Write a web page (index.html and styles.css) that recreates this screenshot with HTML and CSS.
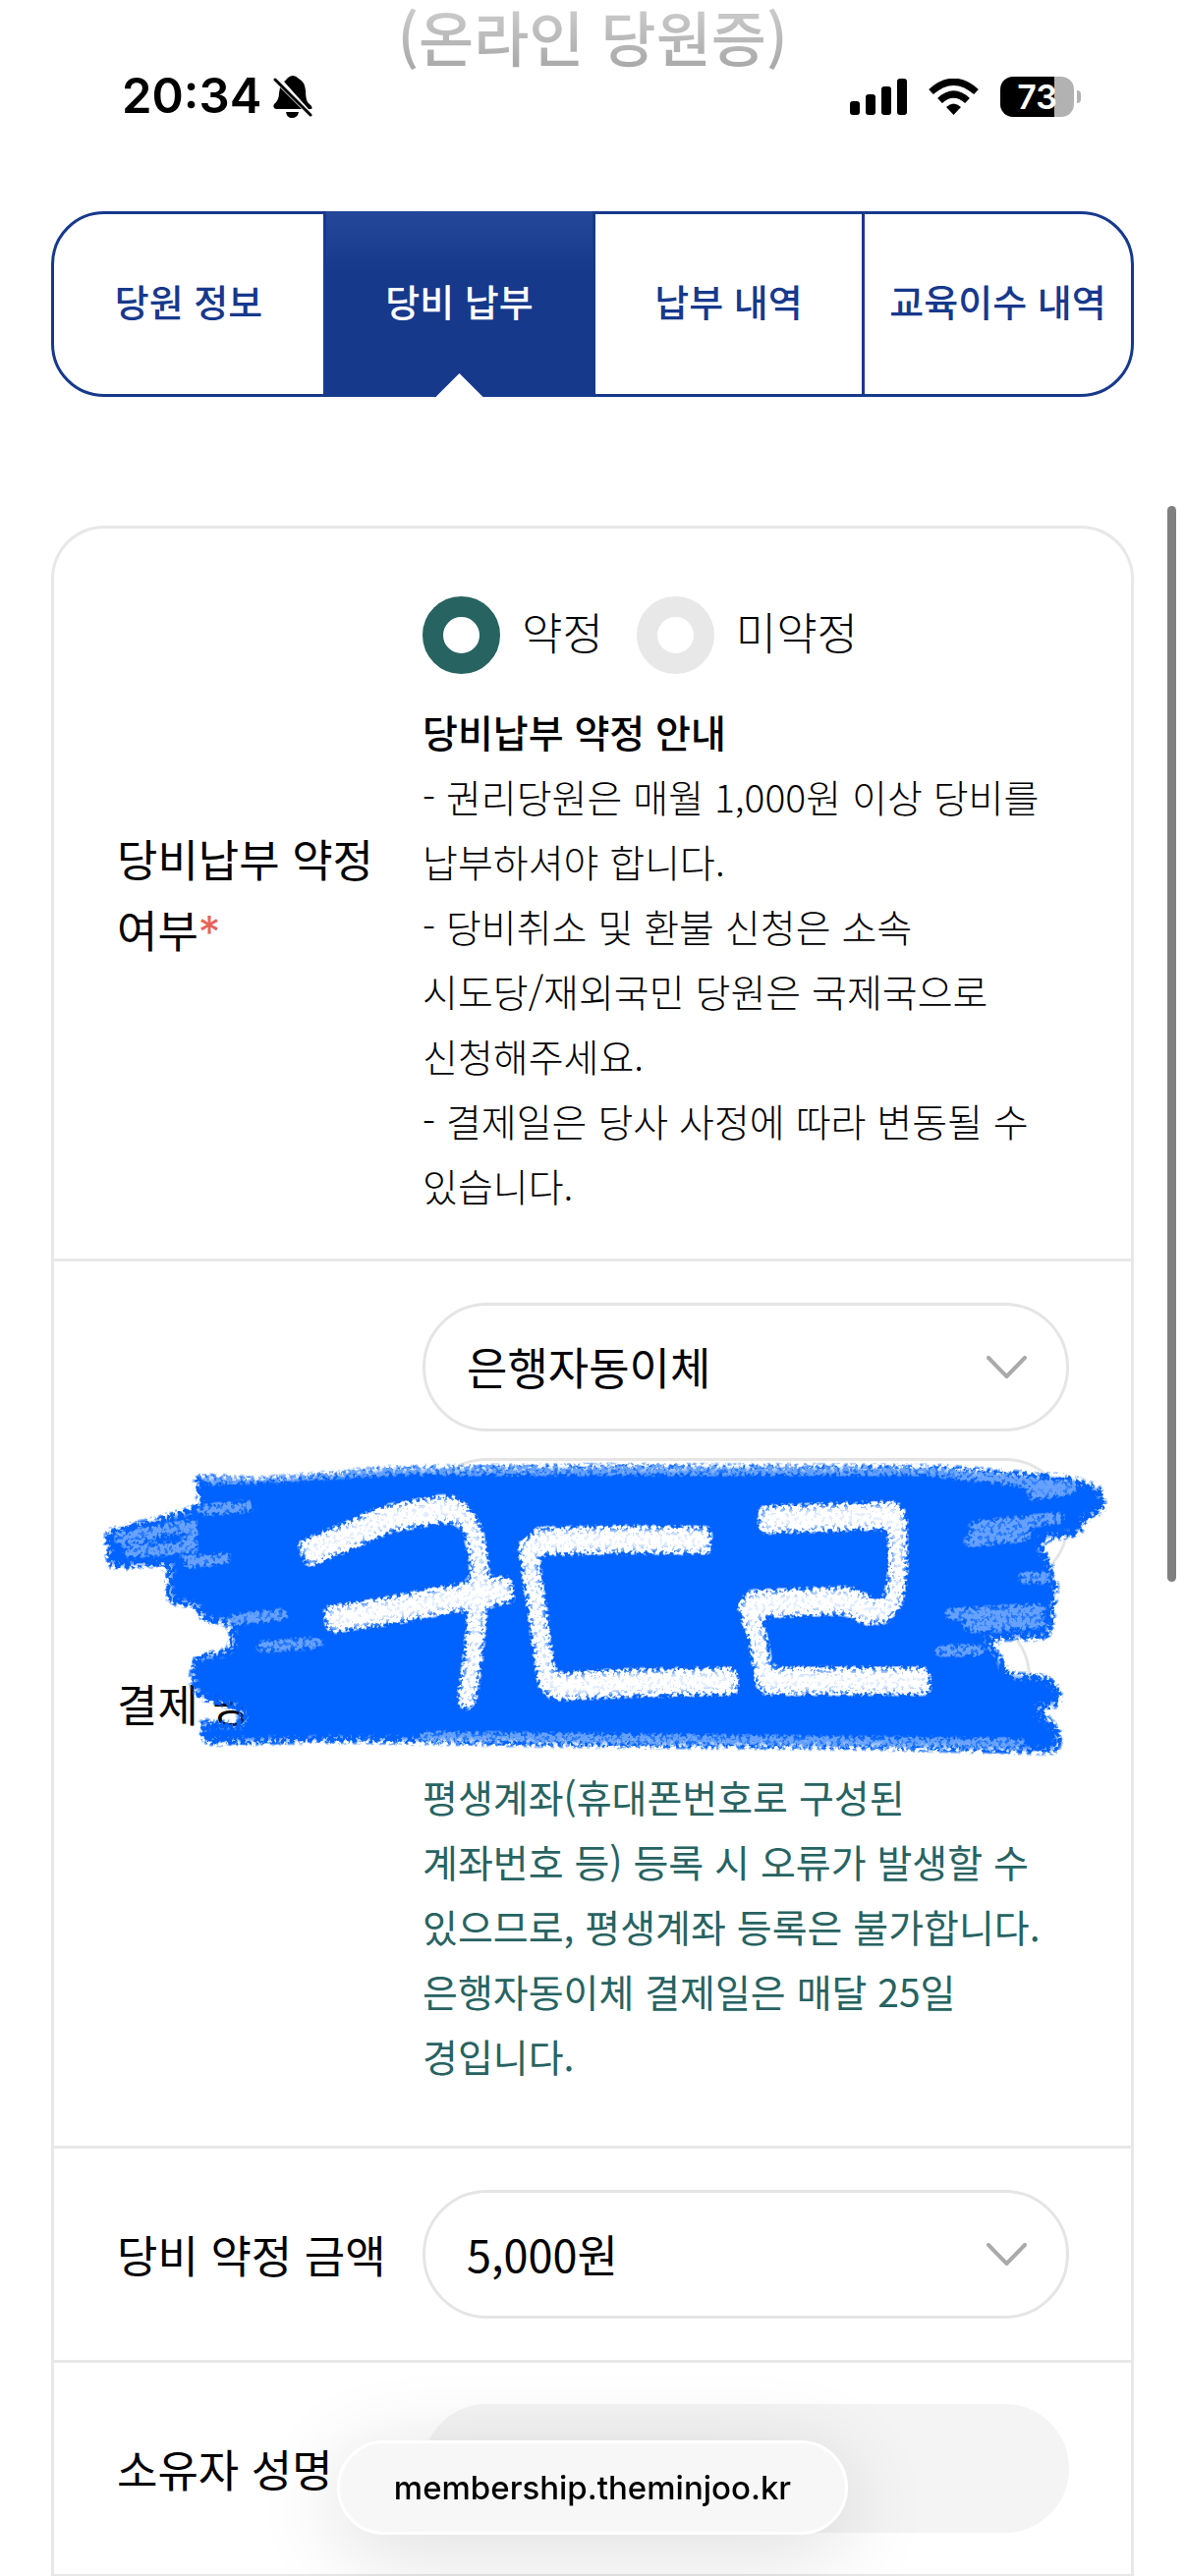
FILE: index.html
```html
<!DOCTYPE html>
<html lang="ko">
<head>
<meta charset="utf-8">
<meta name="viewport" content="width=device-width, initial-scale=1">
<title>당비 납부</title>
<link rel="stylesheet" href="styles.css">
</head>
<body>
<header class="top">
  <h1 class="title">(온라인 당원증)</h1>
  <div class="status">
    <div class="status-side">
      <span class="time">20:34</span>
      <svg class="bell" viewBox="0 0 40 43" aria-hidden="true">
        <path d="M11 6 Q13 5 14 3 Q20 -3 26 3 Q32 6 33 15 Q33 23 35 27 L39 31 Q40 33 39 34 L36 34 Z M7 12 L29 34 H3 Q-1 33 1 29 Q6 25 6 18 Z M13 37 H26 Q25 43 19 43 Q14 43 13 37 Z"/>
        <path d="M2 4 L38 40" fill="none" stroke="#000" stroke-width="3" stroke-linecap="round"/>
      </svg>
    </div>
    <div class="status-side status-right">
      <svg class="signal" viewBox="0 0 58 37" aria-hidden="true">
        <rect x="0" y="23" width="10" height="14" rx="3"/><rect x="16" y="16" width="10" height="21" rx="3"/><rect x="32" y="8" width="10" height="29" rx="3"/><rect x="48" y="0" width="10" height="37" rx="3"/>
      </svg>
      <svg class="wifi" viewBox="0 0 51 37" aria-hidden="true">
        <path d="M25.500 37 L18 29 Q25.500 22 33 29 Z"/>
        <path d="M2.500 13.500 Q25.500 -7 48.500 13.500" fill="none" stroke="#000" stroke-width="7"/>
        <path d="M11.500 22.500 Q25.500 9.500 39.500 22.500" fill="none" stroke="#000" stroke-width="7"/>
      </svg>
      <div class="battery"><span>73</span></div>
    </div>
  </div>
</header>

<nav class="tabs">
  <a class="tab" href="#info">당원 정보</a>
  <a class="tab tab-active" href="#fee" aria-current="page">당비 납부</a>
  <a class="tab" href="#history">납부 내역</a>
  <a class="tab" href="#edu">교육이수 내역</a>
</nav>

<form class="card">
  <fieldset class="row" aria-labelledby="pledge-label">
    <div class="label label-wrap" id="pledge-label">당비납부 약정 여부<em>*</em></div>
    <div class="control">
      <div class="radios">
        <label class="radio"><input type="radio" name="pledge" checked><span>약정</span></label>
        <label class="radio"><input type="radio" name="pledge"><span>미약정</span></label>
      </div>
      <div class="guide">
        <strong>당비납부 약정 안내</strong>
        <p>- 권리당원은 매월 1,000원 이상 당비를 납부하셔야 합니다.</p>
        <p>- 당비취소 및 환불 신청은 소속 <span class="keep">시도당/재외국민</span> 당원은 국제국으로 신청해주세요.</p>
        <p>- 결제일은 당사 사정에 따라 변동될 수 있습니다.</p>
      </div>
    </div>
  </fieldset>

  <div class="row">
    <label class="label" for="method">결제 방법</label>
    <div class="control">
      <div class="fields">
        <div class="select">
          <select id="method"><option>은행자동이체</option></select>
          <svg class="chevron" viewBox="0 0 41 23" aria-hidden="true"><path d="M2 2 L20.500 21 L39 2"/></svg>
        </div>
        <div class="select">
          <select aria-label="은행"><option></option></select>
          <svg class="chevron" viewBox="0 0 41 23" aria-hidden="true"><path d="M2 2 L20.500 21 L39 2"/></svg>
        </div>
        <input class="field account" type="text" aria-label="계좌번호">
      </div>
      <p class="notice">평생계좌(휴대폰번호로 구성된 계좌번호 등) 등록 시 오류가 발생할 수 있으므로, 평생계좌 등록은 불가합니다.<br>은행자동이체 결제일은 매달 25일 경입니다.</p>
    </div>
    <svg class="scribble" viewBox="97 1480 1040 310" aria-hidden="true">
      <defs>
        <filter id="crayon" filterUnits="userSpaceOnUse" x="97" y="1480" width="1040" height="310" color-interpolation-filters="sRGB">
          <feGaussianBlur in="SourceGraphic" stdDeviation="6" result="soft"/>
          <feTurbulence type="fractalNoise" baseFrequency="0.22" numOctaves="3" seed="4"/>
          <feColorMatrix values="0 0 0 0 0  0 0 0 0 0  0 0 0 0 0  5 0 0 0 -2" result="grain"/>
          <feComposite in="soft" in2="grain" operator="arithmetic" k1="1" k2="1"/>
          <feComponentTransfer result="mask"><feFuncA type="linear" slope="2.200" intercept="-1.100"/></feComponentTransfer>
          <feFlood flood-color="#0062ff"/>
          <feComposite in2="mask" operator="in"/>
        </filter>
        <filter id="chalk" filterUnits="userSpaceOnUse" x="97" y="1480" width="1040" height="310" color-interpolation-filters="sRGB">
          <feGaussianBlur in="SourceGraphic" stdDeviation="5" result="soft"/>
          <feTurbulence type="fractalNoise" baseFrequency="0.25" numOctaves="3" seed="9"/>
          <feColorMatrix values="0 0 0 0 0  0 0 0 0 0  0 0 0 0 0  5 0 0 0 -2" result="grain"/>
          <feComposite in="soft" in2="grain" operator="arithmetic" k1="0.700" k2="0.700"/>
          <feComponentTransfer result="mask"><feFuncA type="linear" slope="3" intercept="-1.200"/></feComponentTransfer>
          <feFlood flood-color="#fff"/>
          <feComposite in2="mask" operator="in"/>
        </filter>
      </defs>
      <g filter="url(#crayon)">
        <path stroke="#000" stroke-width="3" stroke-linejoin="round" d="M198 1503 L206 1533 L160 1547 L108 1559 L112 1596 L182 1590 L171 1600 L172 1631 L202 1634 L206 1650 L235 1650 L237 1680 L198 1687 L195 1712 L202 1728 L225 1733 L248 1741 L248 1757 L225 1754 L202 1752 L209 1774 L339 1771 L620 1776 L882 1778 L1076 1783 L1079 1765 L1070 1753 L1046 1738 L1078 1736 L1078 1719 L1065 1707 L1025 1705 L1016 1683 L997 1667 L1067 1667 L1072 1638 L1075 1614 L1068 1590 L1055 1567 L1100 1561 L1102 1545 L1123 1538 L1122 1516 L1087 1504 L956 1494 L620 1493 L398 1495 L320 1502 L265 1506 Z"/>
      </g>
      <g fill="none" stroke="#fff" stroke-linecap="round" stroke-width="11" filter="url(#chalk)" opacity="0.4">
        <path d="M206 1537 L255 1533 M190 1591 L232 1586 M235 1649 L290 1643 M265 1676 L325 1672 M990 1554 L1080 1545 M985 1569 L1045 1563 M965 1643 L1060 1638 M1040 1606 L1068 1606 M985 1656 L1060 1652 M955 1680 L998 1680 M430 1768 L1040 1775 M120 1566 L195 1552 L195 1575 L130 1580 M210 1506 L400 1496 M400 1496 L950 1496 M950 1497 L1095 1514 L1050 1522"/>
      </g>
      <g fill="none" stroke="#fff" stroke-linejoin="round" filter="url(#chalk)">
        <g stroke-width="28">
          <path d="M307 1583 L346 1567 L394 1546 L450 1536 L468 1538"/>
          <path d="M331 1649 L394 1640 L450 1629 L522 1617"/>
          <path d="M724 1568 L640 1567 L542 1569"/>
          <path d="M558 1717 L640 1713 L751 1711"/>
          <path d="M772 1547 L915 1542"/>
          <path d="M760 1633 L863 1629 L892 1644"/>
          <path d="M775 1711 L947 1711"/>
        </g>
        <g stroke-width="19" stroke-linecap="round">
          <path d="M468 1538 L481 1556 L488 1590 L486 1640 L481 1690 L475 1731"/>
          <path d="M537 1574 L546 1634 L557 1714"/>
          <path d="M913 1542 L914 1600 L909 1630 L897 1644"/>
          <path d="M760 1635 L772 1670 L778 1712"/>
        </g>
      </g>
    </svg>
  </div>

  <div class="row">
    <label class="label" for="amount">당비 약정 금액</label>
    <div class="control">
      <div class="select">
        <select id="amount"><option>5,000원</option></select>
        <svg class="chevron" viewBox="0 0 41 23" aria-hidden="true"><path d="M2 2 L20.500 21 L39 2"/></svg>
      </div>
    </div>
  </div>

  <div class="row">
    <label class="label" for="owner">소유자 성명</label>
    <div class="control"><input class="field" id="owner" type="text" disabled></div>
  </div>
</form>

<div class="scrollbar"></div>
<button class="address" type="button">membership.theminjoo.kr</button>
</body>
</html>
```
FILE: styles.css
```css
* { box-sizing: border-box; }

body {
  position: relative;
  margin: 0;
  background: #fff;
  color: #000;
  font-family: "Noto Sans CJK KR", sans-serif;
  font-size: 45px;
  word-break: keep-all;
}

/* status bar */
.top { height: 215px; }

.title {
  margin: 0;
  padding-bottom: 4px;
  font-size: 61px;
  font-weight: 500;
  line-height: 73px;
  text-align: center;
  color: transparent;
  background: linear-gradient(#d0d0d0, #a4a4a4);
  background-clip: text;
}

.status {
  display: flex;
  justify-content: space-between;
  height: 42px;
  padding: 0 113px 0 124px;
  font-family: Inter, sans-serif;
  font-weight: 600;
}

.status-side { display: flex; align-items: center; gap: 12px; }
.status-right { gap: 22px; }
.time { font-size: 49px; line-height: 42px; }
.bell { width: 40px; height: 43px; }
.signal { width: 58px; height: 37px; }
.wifi { width: 51px; height: 37px; }

.battery {
  position: relative;
  width: 75px;
  height: 41px;
  border-radius: 13px;
  background: linear-gradient(90deg, #000 55px, #b2b2b2 55px);
  color: #fff;
  font-size: 34px;
  line-height: 41px;
  text-align: center;
}

.battery::after {
  content: "";
  position: absolute;
  top: 14px;
  right: -7px;
  width: 4px;
  height: 13px;
  border-radius: 0 4px 4px 0;
  background: #b2b2b2;
}

/* tabs */
.tabs {
  display: grid;
  grid-template-columns: repeat(4, 1fr);
  height: 189px;
  margin: 0 52px 131px;
  border: 3px solid #17398c;
  border-radius: 54px;
}

.tab {
  display: flex;
  align-items: center;
  justify-content: center;
  padding-bottom: 8px;
  color: #17398c;
  font-size: 38px;
  font-weight: 500;
  text-decoration: none;
  white-space: nowrap;
}

.tab + .tab { border-left: 3px solid #17398c; }

.tab-active {
  position: relative;
  margin: -3px 0;
  background: linear-gradient(#24489a, #17398c 60px);
  color: #fff;
}

.tab-active::after {
  content: "";
  position: absolute;
  bottom: 0;
  left: 50%;
  width: 48px;
  height: 24px;
  margin-left: -24px;
  background: #fff;
  clip-path: polygon(50% 0, 100% 100%, 0 100%);
}

/* form */
.card {
  margin: 0 52px;
  border: 3px solid #e8e8e8;
  border-bottom: 0;
  border-radius: 54px 54px 0 0;
}

.row {
  display: grid;
  grid-template-columns: 311px 1fr;
  align-items: center;
  position: relative;
  min-width: 0;
  margin: 0;
  padding: 42px 63px 42px 64px;
  border: 0;
  border-bottom: 3px solid #e8e8e8;
}

.label { line-height: 72px; padding-right: 40px; white-space: nowrap; }
.label-wrap { white-space: normal; }
.label em { color: #e8625a; font-family: Inter, sans-serif; font-style: normal; line-height: 45px; }

.radios { display: flex; gap: 34px; margin: 27px 0 25px; }

.radio {
  display: flex;
  align-items: center;
  gap: 22px;
  height: 79px;
  font-weight: 300;
}

.radio span { padding-bottom: 8px; }

.radio input {
  appearance: none;
  width: 79px;
  height: 79px;
  margin: 0;
  border: 21px solid #e8e8e8;
  border-radius: 50%;
  background: #fff;
}

.radio input:checked { border-color: #276361; }

.guide, .notice { font-size: 39px; line-height: 66px; }
.guide { font-weight: 300; }
.guide strong { display: block; font-weight: 500; }
.guide p, .notice { margin: 0; }
.keep { white-space: nowrap; }
.notice { padding: 22px 20px 17px 0; color: #276361; }

.fields { display: grid; gap: 27px; }
.select { position: relative; }

.select select, .field {
  appearance: none;
  display: block;
  width: 100%;
  height: 131px;
  margin: 0;
  padding: 0 42px 2px;
  border: 3px solid #e5e5e5;
  border-radius: 66px;
  background: #fff;
  color: #000;
  font: inherit;
  opacity: 1;
}

.field:disabled { border-color: #f4f4f4; background: #f4f4f4; }
.account { width: 94%; }

.chevron {
  position: absolute;
  top: 54px;
  right: 43px;
  width: 41px;
  height: 23px;
  fill: none;
  stroke: #aaa;
  stroke-width: 4;
  stroke-linecap: round;
  pointer-events: none;
}

.scribble { position: absolute; top: 196px; left: 42px; width: calc(100% - 56px); }

/* browser overlays */
.scrollbar {
  position: absolute;
  top: 515px;
  right: 9px;
  width: 9px;
  height: 1095px;
  border-radius: 5px;
  background: #808080;
}

.address {
  position: fixed;
  right: 0;
  bottom: 42px;
  left: 0;
  width: fit-content;
  height: 96px;
  margin: 0 auto;
  padding: 0 55px;
  border: 3px solid #fff;
  border-radius: 48px;
  background: #f7f7f7;
  box-shadow: 0 16px 90px rgba(0, 0, 0, 0.14);
  color: #000;
  font-family: Inter, sans-serif;
  font-size: 33px;
  font-weight: 500;
}
```
